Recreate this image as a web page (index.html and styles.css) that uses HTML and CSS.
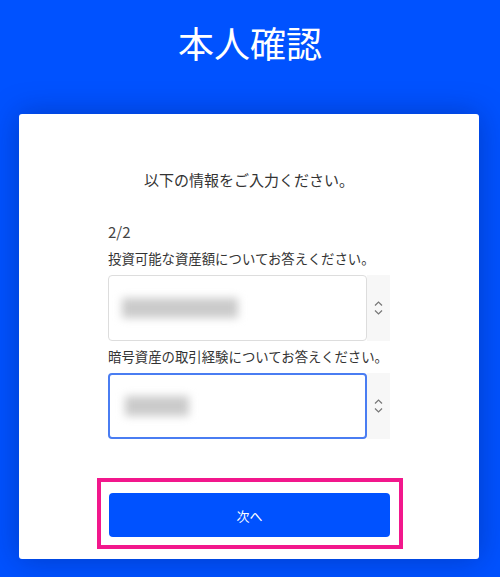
FILE: index.html
```html
<!DOCTYPE html>
<html lang="ja">
<head>
  <meta charset="utf-8">
  <meta name="viewport" content="width=device-width, initial-scale=1.0">
  <title>本人確認</title>
  <link rel="stylesheet" href="styles.css">
</head>
<body>
<div class="page-head">
  <h1>本人確認</h1>
</div>
<div class="card">
  <p class="intro">以下の情報をご入力ください。</p>
  <div class="form-col">
    <div class="step">2/2</div>
    <label class="q-label">投資可能な資産額についてお答えください。</label>
    <div class="select-row">
      <div class="select-box"><span class="blur blur-long"></span></div>
      <div class="select-arrow">
        <svg width="9" height="16" viewBox="0 0 9 16"><path d="M1 5.5 L4.5 2 L8 5.5 M1 10.5 L4.5 14 L8 10.5" fill="none" stroke="#777" stroke-width="1.2"/></svg>
      </div>
    </div>
    <label class="q-label">暗号資産の取引経験についてお答えください。</label>
    <div class="select-row">
      <div class="select-box focused"><span class="blur blur-short"></span></div>
      <div class="select-arrow">
        <svg width="9" height="16" viewBox="0 0 9 16"><path d="M1 5.5 L4.5 2 L8 5.5 M1 10.5 L4.5 14 L8 10.5" fill="none" stroke="#777" stroke-width="1.2"/></svg>
      </div>
    </div>
    <div class="highlight">
      <button type="button" class="btn-next">次へ</button>
    </div>
  </div>
</div>
</body>
</html>
```

FILE: styles.css
```css
body {
  margin: 0;
  background-color: #0052ff;
  font-family: "Noto Sans CJK JP", "Noto Sans", sans-serif;
  color: #333;
  height: 577px;
  overflow: hidden;
}
.page-head {
  height: 114px;
  text-align: center;
}
.page-head h1 {
  margin: 0;
  padding-top: 24px;
  font-size: 36px;
  line-height: 36px;
  font-weight: 400;
  color: #fff;
}
.card {
  margin: 0 21px 0 19px;
  background-color: #fff;
  border-radius: 3px;
  padding: 55px 0 10px;
  box-shadow: 0 0 30px rgba(0, 20, 90, 0.35);
}
.intro {
  margin: 0;
  text-align: center;
  font-size: 15px;
  line-height: 22px;
}
.form-col {
  width: 282px;
  margin: 31px auto 0;
  display: flex;
  flex-direction: column;
}
.step {
  font-size: 15px;
  line-height: 20px;
  margin-bottom: 6px;
  color: #444;
}
.q-label {
  font-size: 13.4px;
  line-height: 20px;
  white-space: nowrap;
}
.select-row {
  display: flex;
  margin: 7px 0 5px;
}
.select-box {
  width: 259px;
  height: 66px;
  box-sizing: border-box;
  border: 1px solid #ddd;
  border-radius: 4px;
  display: flex;
  align-items: center;
  padding-left: 13px;
}
.select-box.focused {
  border: 2px solid #4a7df2;
  padding-left: 15px;
}
.blur {
  display: block;
  height: 20px;
  background-color: #cbcbcb;
  filter: blur(4px);
}
.blur-long {
  width: 116px;
}
.blur-short {
  width: 64px;
}
.select-arrow {
  width: 23px;
  height: 66px;
  background-color: #f7f7f7;
  display: flex;
  align-items: center;
  justify-content: center;
}
.highlight {
  margin: 34px -13px 0 -11px;
  border: 4px solid #f2178c;
  padding: 11px 9px 8px 8px;
}
.btn-next {
  display: block;
  width: 100%;
  height: 44px;
  border: 0;
  border-radius: 4px;
  background-color: #0052ff;
  color: #fff;
  font-family: inherit;
  font-size: 13px;
}
```
